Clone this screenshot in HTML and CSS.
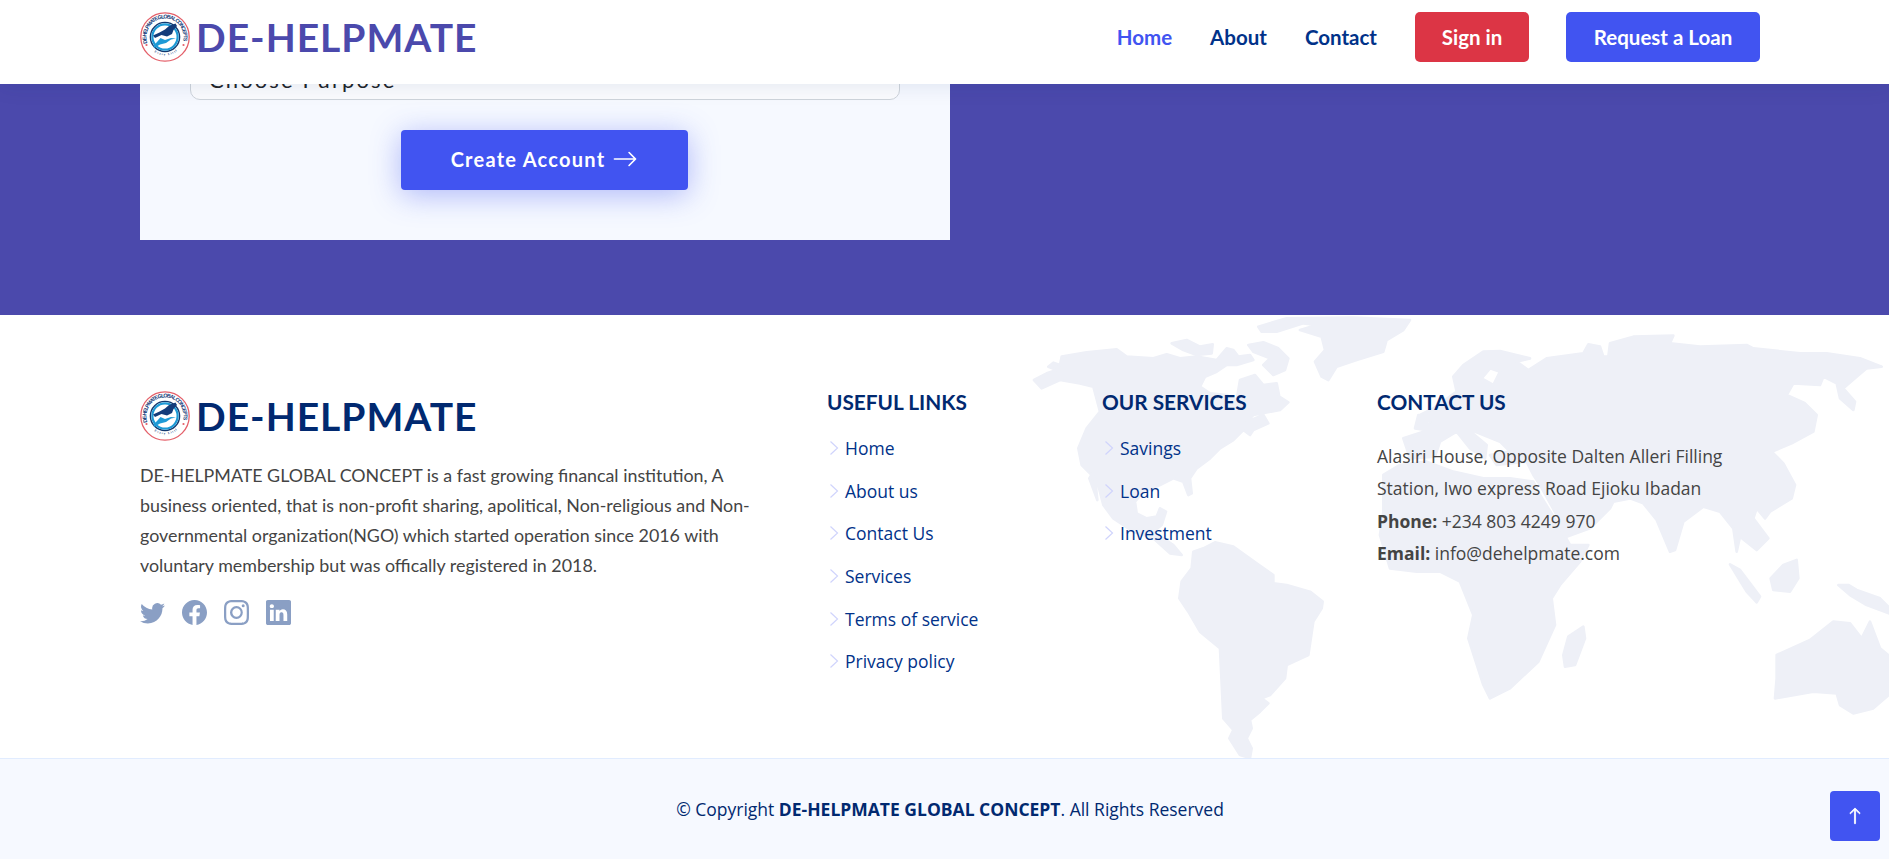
FILE: index.html
```html
<!DOCTYPE html>
<html lang="en">
<head>
<meta charset="utf-8">
<title>DE-HELPMATE</title>
<link rel="stylesheet" href="styles.css">
</head>
<body>
<svg class="defs" width="0" height="0" aria-hidden="true">
  <defs>
    <symbol id="logo" viewBox="0 0 50 50">
      <circle cx="25" cy="25" r="24.2" fill="#fff" stroke="#e4606a" stroke-width="1.3"/>
      <path id="ringtop" d="M7.4 31 A18.6 18.6 0 1 1 42.6 31" fill="none"/>
      <path id="ringbot" d="M12 38 A18.4 18.4 0 0 0 38 38" fill="none"/>
      <text class="logo-ring"><textPath href="#ringtop" textLength="69" startOffset="0">DE-HELPMATE GLOBAL CONCEPTS</textPath></text>
      <text class="logo-ring-small"><textPath href="#ringbot" startOffset="3">Every Little Counts</textPath></text>
      <circle cx="6.5" cy="33" r="1.1" fill="#e4606a"/>
      <circle cx="43.5" cy="33" r="1.1" fill="#e4606a"/>
      <circle cx="25" cy="25" r="14.6" fill="#fff" stroke="#12386e" stroke-width="1.4"/>
      <circle cx="25" cy="25" r="12.6" fill="#fff" stroke="#1e9ad6" stroke-width="2.2"/>
      <path d="M13 23.5 L19.5 20.5 L25 17.5 L29 14 L35.5 11.5 L37 14 L33.5 18 L32 22 L27 24.5 L21.5 23 L15 26 Z" fill="#143c7a"/>
      <path d="M36 26.5 L31 27.5 L26 31 L20 32.5 L14 36 L13.5 33.5 L17 30 L20.5 26 L25 28 L31 26 Z" fill="#1e9ad6"/>
    </symbol>
    <symbol id="chev" viewBox="0 0 10 16">
      <path d="M1.5 1.5 L8.5 8 L1.5 14.5" fill="none" stroke="currentColor" stroke-width="1.2"/>
    </symbol>
  </defs>
</svg>

<header class="topbar">
  <div class="container topbar-row">
    <a class="brand brand-purple" href="#">
      <svg class="brand-logo"><use href="#logo"/></svg>
      <span>DE-HELPMATE</span>
    </a>
    <nav class="nav">
      <a class="nav-link active" href="#">Home</a>
      <a class="nav-link" href="#">About</a>
      <a class="nav-link" href="#">Contact</a>
      <a class="nav-btn btn-red" href="#">Sign in</a>
      <a class="nav-btn btn-blue" href="#">Request a Loan</a>
    </nav>
  </div>
</header>

<main class="hero">
  <div class="container">
    <form class="card">
      <div class="field">Choose Purpose</div>
      <div class="actions">
        <button class="create" type="button">Create Account
          <svg class="create-arrow" viewBox="0 0 16 16"><path fill="currentColor" fill-rule="evenodd" d="M1 8a.5.5 0 0 1 .5-.5h11.793l-3.147-3.146a.5.5 0 0 1 .708-.708l4 4a.5.5 0 0 1 0 .708l-4 4a.5.5 0 0 1-.708-.708L13.293 8.5H1.5A.5.5 0 0 1 1 8z"/></svg>
        </button>
      </div>
    </form>
  </div>
</main>

<footer class="footer">
  <section class="footer-top">
    <svg class="world" viewBox="0 0 2607 1329" aria-hidden="true">
      <g class="land">
        <path d="M42 195 L80 175 L110 165 L85 155 L100 143 L120 150 L125 125 L200 112 L290 103 L320 125 L400 130 L440 118 L480 130 L530 125 L590 135 L620 100 L640 105 L655 125 L690 120 L700 135 L650 150 L620 150 L590 170 L555 185 L540 215 L570 235 L620 240 L650 255 L660 195 L705 180 L730 210 L770 205 L778 245 L805 262 L780 285 L700 300 L680 320 L730 300 L745 325 L700 345 L690 360 L670 345 L640 375 L600 400 L570 430 L530 460 L510 490 L515 535 L505 540 L490 500 L460 490 L420 510 L370 530 L345 560 L350 595 L380 610 L410 605 L420 580 L438 590 L425 630 L400 650 L460 690 L485 720 L450 715 L400 670 L340 650 L280 610 L250 570 L232 500 L215 478 L208 490 L232 555 L225 490 L185 450 L175 400 L200 340 L240 290 L220 215 L180 205 L120 195 L65 220 Z"/>
        <path d="M455 85 L500 75 L540 95 L578 88 L575 115 L530 120 L490 105 Z"/>
        <path d="M685 90 L730 82 L775 100 L805 130 L795 165 L760 180 L730 150 L750 130 L700 110 Z"/>
        <path d="M715 35 L800 10 L1000 8 L1170 15 L1150 45 L1100 75 L1090 110 L1010 135 L950 155 L925 195 L905 185 L885 140 L915 105 L905 65 L840 45 L890 30 L850 25 L770 50 L725 50 Z"/>
        <path d="M585 682 L640 695 L710 745 L760 780 L760 805 L800 810 L870 830 L908 860 L905 880 L880 920 L865 1020 L800 1050 L795 1090 L750 1140 L725 1150 L745 1165 L720 1190 L690 1215 L695 1240 L680 1270 L695 1300 L690 1329 L660 1320 L628 1270 L640 1245 L610 1210 L600 1000 L540 950 L505 890 L478 850 L485 800 L515 760 L520 710 L550 700 Z"/>
      </g>
      <g class="land land-east">
        <path fill-rule="evenodd" d="M160 185 L190 150 L250 110 L300 108 L390 130 L350 140 L385 165 L440 130 L550 115 L565 88 L600 95 L610 125 L625 125 L630 85 L700 65 L820 62 L810 85 L900 95 L1040 90 L1060 100 L1200 115 L1280 115 L1380 130 L1445 155 L1400 160 L1370 185 L1330 220 L1365 260 L1360 285 L1320 250 L1310 205 L1270 185 L1260 210 L1180 205 L1160 240 L1215 265 L1250 300 L1240 350 L1175 385 L1115 410 L1150 445 L1185 510 L1175 550 L1110 590 L1095 610 L1070 580 L1060 610 L1105 670 L1070 705 L1020 665 L1010 710 L1000 640 L960 590 L910 575 L850 620 L825 705 L810 710 L770 615 L730 565 L690 550 L640 560 L630 580 L570 640 L500 665 L470 600 L420 510 L400 480 L380 440 L290 450 L270 420 L330 410 L300 380 L200 340 L260 390 L255 430 L210 400 L170 350 L120 380 L105 425 L30 430 L10 370 L70 350 L90 320 L60 300 L100 280 L170 230 Z M270 160 L300 170 L280 210 L245 190 Z"/>
        <path d="M55 300 L85 310 L75 345 L45 340 Z"/>
        <path d="M-50 480 L0 450 L80 440 L160 470 L250 490 L330 490 L400 500 L420 540 L470 620 L510 690 L565 690 L540 740 L480 810 L455 850 L465 930 L415 1040 L330 1120 L270 1150 L250 1110 L205 970 L220 900 L180 800 L120 770 L50 770 L-30 760 L-60 660 L-50 590 Z"/>
        <path d="M550 935 L555 970 L525 1050 L495 1055 L490 1020 L505 965 Z"/>
        <path d="M990 748 L1020 765 L1080 845 L1070 862 L1040 830 Z"/>
        <path d="M1190 735 L1195 790 L1170 830 L1120 825 L1112 790 L1150 750 Z"/>
        <path d="M1315 810 L1345 810 L1370 825 L1440 850 L1489 900 L1480 900 L1400 870 L1350 840 Z"/>
        <path d="M1130 1020 L1230 975 L1300 920 L1350 925 L1385 970 L1410 920 L1440 1000 L1489 1040 L1489 1120 L1420 1180 L1360 1195 L1320 1170 L1310 1135 L1240 1130 L1125 1150 L1130 1090 Z"/>
      </g>
    </svg>
    <div class="container footer-grid">
      <div class="about">
        <a class="brand brand-navy" href="#">
          <svg class="brand-logo"><use href="#logo"/></svg>
          <span>DE-HELPMATE</span>
        </a>
        <p class="about-text">DE-HELPMATE GLOBAL CONCEPT is a fast growing financal institution, A<br>business oriented, that is non-profit sharing, apolitical, Non-religious and Non-<br>governmental organization(NGO) which started operation since 2016 with<br>voluntary membership but was offically registered in 2018.</p>
        <div class="social">
          <a href="#"><svg viewBox="0 0 16 16"><path d="M5.026 15c6.038 0 9.341-5.003 9.341-9.334 0-.14 0-.282-.006-.422A6.685 6.685 0 0 0 16 3.542a6.658 6.658 0 0 1-1.889.518 3.301 3.301 0 0 0 1.447-1.817 6.533 6.533 0 0 1-2.087.793A3.286 3.286 0 0 0 7.875 6.03a9.325 9.325 0 0 1-6.767-3.429 3.289 3.289 0 0 0 1.018 4.382A3.323 3.323 0 0 1 .64 6.575v.045a3.288 3.288 0 0 0 2.632 3.218 3.203 3.203 0 0 1-.865.115 3.23 3.23 0 0 1-.614-.057 3.283 3.283 0 0 0 3.067 2.277A6.588 6.588 0 0 1 .78 13.58a6.32 6.32 0 0 1-.78-.045A9.344 9.344 0 0 0 5.026 15z"/></svg></a>
          <a href="#"><svg viewBox="0 0 16 16"><path d="M16 8.049c0-4.446-3.582-8.05-8-8.05C3.58 0-.002 3.603-.002 8.05c0 4.017 2.926 7.347 6.75 7.951v-5.625h-2.03V8.05H6.75V6.275c0-2.017 1.195-3.131 3.022-3.131.876 0 1.791.157 1.791.157v1.98h-1.009c-.993 0-1.303.621-1.303 1.258v1.51h2.218l-.354 2.326H9.25V16c3.824-.604 6.75-3.934 6.75-7.951z"/></svg></a>
          <a href="#"><svg viewBox="0 0 16 16"><path d="M8 0C5.829 0 5.556.01 4.703.048 3.85.088 3.269.222 2.76.42a3.917 3.917 0 0 0-1.417.923A3.927 3.927 0 0 0 .42 2.76C.222 3.268.087 3.85.048 4.7.01 5.555 0 5.827 0 8.001c0 2.172.01 2.444.048 3.297.04.852.174 1.433.372 1.942.205.526.478.972.923 1.417.444.445.89.719 1.416.923.51.198 1.09.333 1.942.372C5.555 15.99 5.827 16 8 16s2.444-.01 3.298-.048c.851-.04 1.434-.174 1.943-.372a3.916 3.916 0 0 0 1.416-.923c.445-.445.718-.891.923-1.417.197-.509.332-1.09.372-1.942C15.99 10.445 16 10.173 16 8s-.01-2.445-.048-3.299c-.04-.851-.175-1.433-.372-1.941a3.926 3.926 0 0 0-.923-1.417A3.911 3.911 0 0 0 13.24.42c-.51-.198-1.092-.333-1.943-.372C10.443.01 10.172 0 7.998 0h.003zm-.717 1.442h.718c2.136 0 2.389.007 3.232.046.78.035 1.204.166 1.486.275.373.145.64.319.92.599.28.28.453.546.598.92.11.281.24.705.275 1.485.039.843.047 1.096.047 3.231s-.008 2.389-.047 3.232c-.035.78-.166 1.203-.275 1.485a2.47 2.47 0 0 1-.599.919c-.28.28-.546.453-.92.598-.28.11-.704.24-1.485.276-.843.038-1.096.047-3.232.047s-2.39-.009-3.233-.047c-.78-.036-1.203-.166-1.485-.276a2.478 2.478 0 0 1-.92-.598 2.48 2.48 0 0 1-.6-.92c-.109-.281-.24-.705-.275-1.485-.038-.843-.046-1.096-.046-3.233 0-2.136.008-2.388.046-3.231.036-.78.166-1.204.276-1.486.145-.373.319-.64.599-.92.28-.28.546-.453.92-.598.282-.11.705-.24 1.485-.276.738-.034 1.024-.044 2.515-.045v.002zm4.988 1.328a.96.96 0 1 0 0 1.92.96.96 0 0 0 0-1.92zm-4.27 1.122a4.109 4.109 0 1 0 0 8.217 4.109 4.109 0 0 0 0-8.217zm0 1.441a2.667 2.667 0 1 1 0 5.334 2.667 2.667 0 0 1 0-5.334z"/></svg></a>
          <a href="#"><svg viewBox="0 0 16 16"><path d="M0 1.146C0 .513.526 0 1.175 0h13.65C15.474 0 16 .513 16 1.146v13.708c0 .633-.526 1.146-1.175 1.146H1.175C.526 16 0 15.487 0 14.854V1.146zm4.943 12.248V6.169H2.542v7.225h2.401zm-1.2-8.212c.837 0 1.358-.554 1.358-1.248-.015-.709-.52-1.248-1.342-1.248-.822 0-1.359.54-1.359 1.248 0 .694.521 1.248 1.327 1.248h.016zm4.908 8.212V9.359c0-.216.016-.432.08-.586.173-.431.568-.878 1.232-.878.869 0 1.216.662 1.216 1.634v3.865h2.401V9.25c0-2.22-1.184-3.252-2.764-3.252-1.274 0-1.845.7-2.165 1.193v.025h-.016a5.54 5.54 0 0 1 .016-.025V6.169h-2.4c.03.678 0 7.225 0 7.225h2.4z"/></svg></a>
        </div>
      </div>
      <div class="col">
        <h4 class="col-title">USEFUL LINKS</h4>
        <ul class="links">
          <li><svg class="chev"><use href="#chev"/></svg><a href="#">Home</a></li>
          <li><svg class="chev"><use href="#chev"/></svg><a href="#">About us</a></li>
          <li><svg class="chev"><use href="#chev"/></svg><a href="#">Contact Us</a></li>
          <li><svg class="chev"><use href="#chev"/></svg><a href="#">Services</a></li>
          <li><svg class="chev"><use href="#chev"/></svg><a href="#">Terms of service</a></li>
          <li><svg class="chev"><use href="#chev"/></svg><a href="#">Privacy policy</a></li>
        </ul>
      </div>
      <div class="col">
        <h4 class="col-title">OUR SERVICES</h4>
        <ul class="links">
          <li><svg class="chev"><use href="#chev"/></svg><a href="#">Savings</a></li>
          <li><svg class="chev"><use href="#chev"/></svg><a href="#">Loan</a></li>
          <li><svg class="chev"><use href="#chev"/></svg><a href="#">Investment</a></li>
        </ul>
      </div>
      <div class="col">
        <h4 class="col-title">CONTACT US</h4>
        <p class="contact">Alasiri House, Opposite Dalten Alleri Filling<br>Station, Iwo express Road Ejioku Ibadan<br><strong>Phone:</strong> +234 803 4249 970<br><strong>Email:</strong> info@dehelpmate.com</p>
      </div>
    </div>
  </section>
  <section class="footer-bottom">
    <div class="container copyright">© Copyright <strong>DE-HELPMATE GLOBAL CONCEPT</strong>. All Rights Reserved</div>
  </section>
</footer>

<a class="back-top" href="#"><svg viewBox="0 0 16 16"><path fill="currentColor" stroke="currentColor" stroke-width=".7" fill-rule="evenodd" d="M8 15a.5.5 0 0 0 .5-.5V2.707l3.146 3.147a.5.5 0 0 0 .708-.708l-4-4a.5.5 0 0 0-.708 0l-4 4a.5.5 0 1 0 .708.708L7.5 2.707V14.5a.5.5 0 0 0 .5.5z"/></svg></a>
</body>
</html>
```

FILE: styles.css
```css
* { box-sizing: border-box; }
html, body { margin: 0; height: 859px; overflow: hidden; }
body { font-family: "Open Sans", sans-serif; color: #444; background: #fff; }
a { text-decoration: none; color: inherit; }
.defs { display: block; height: 0; }

.container { width: 1889px; padding: 0 129px 0 140px; }

.topbar { position: relative; z-index: 2; height: 84px; background: #fff; box-shadow: 0 2px 20px rgba(1, 41, 112, .1); }
.topbar-row { height: 84px; display: flex; align-items: flex-start; justify-content: space-between; padding-top: 12px; }

.brand { display: flex; align-items: center; gap: 6px; font-family: Lato, sans-serif; font-weight: 700; font-size: 39px; line-height: 50px; letter-spacing: 1px; }
.brand-purple { color: #4b49ac; }
.brand-navy { color: #012970; }
.brand-logo { width: 50px; height: 50px; flex: none; }
.logo-ring { font-family: "Liberation Sans", sans-serif; font-weight: 700; font-size: 5.4px; fill: #143c7a; }
.logo-ring-small { font-family: "Liberation Serif", serif; font-size: 3px; fill: #143c7a; }

.nav { display: flex; align-items: center; font-family: Lato, sans-serif; font-weight: 700; font-size: 20.5px; }
.nav-link { color: #013289; margin-right: 38px; }
.nav-link.active { color: #4154f1; }
.nav-btn { height: 50px; display: flex; align-items: center; justify-content: center; border-radius: 5px; color: #fff; }
.btn-red { width: 114px; background: #dc3545; margin-right: 37px; }
.btn-blue { width: 194px; background: #4154f1; }

.hero { height: 231px; background: #4b49ac; overflow: hidden; }
.card { display: flow-root; width: 810px; height: 156px; background: #f6f9ff; padding: 0 50px; }
.field { height: 48px; margin-top: -32px; padding: 14px 18px 0; border: 1px solid #ced4da; border-radius: 10px; background: #fbfcfe; font-family: Lato, sans-serif; font-size: 22px; line-height: 26px; letter-spacing: 2.1px; color: #212529; }
.actions { display: flex; justify-content: center; margin-top: 30px; padding-right: 1px; }
.create { width: 287px; height: 60px; display: flex; align-items: center; justify-content: center; gap: 7px; border: 0; border-radius: 4px; padding: 0 0 2px; background: #4154f1; color: #fff; font-family: Lato, sans-serif; font-weight: 700; font-size: 20px; letter-spacing: 1.25px; box-shadow: 0 5px 30px rgba(65, 84, 241, .4); }
.create-arrow { width: 26px; height: 26px; }

.footer-top { position: relative; height: 443px; overflow: hidden; background: #fff; }
.world { position: absolute; left: 1020px; top: 0; width: 869px; height: 443px; }
.land { fill: #eef0f7; stroke: #eef0f7; stroke-width: 8; stroke-linejoin: round; }
.land-east { transform: translateX(1140px); }
.footer-grid { position: relative; display: grid; grid-template-columns: 687px 275px 275px 1fr; padding-top: 75px; }

.about { padding-top: 1px; }
.about-text { margin: 19px 0 0; font-family: Lato, sans-serif; font-size: 17.85px; line-height: 30px; color: #444; }
.social { display: flex; gap: 17px; margin-top: 20px; }
.social a { display: block; width: 25px; height: 25px; }
.social svg { display: block; width: 25px; height: 25px; fill: #8a9fc4; }

.col-title { margin: 0; font-family: Lato, sans-serif; font-weight: 700; font-size: 20.8px; line-height: 24px; color: #012970; }
.links { list-style: none; margin: 13px 0 0; padding: 0; }
.links li { display: flex; align-items: center; height: 42.6px; font-size: 17.5px; color: #013289; }
.chev { width: 10px; height: 16px; margin: 0 6px 0 2px; color: #d0d4fc; }
.contact { margin: 26px 0 0; font-size: 17.5px; line-height: 32.4px; color: #444; }

.footer-bottom { height: 101px; display: flex; align-items: center; background: #f6f9ff; border-top: 1px solid #e1ecff; }
.copyright { text-align: center; font-size: 17.5px; color: #012970; }

.back-top { position: fixed; right: 9px; bottom: 18px; width: 50px; height: 50px; display: flex; align-items: center; justify-content: center; border-radius: 4px; background: #4154f1; color: #fff; }
.back-top svg { width: 18px; height: 18px; }
```
